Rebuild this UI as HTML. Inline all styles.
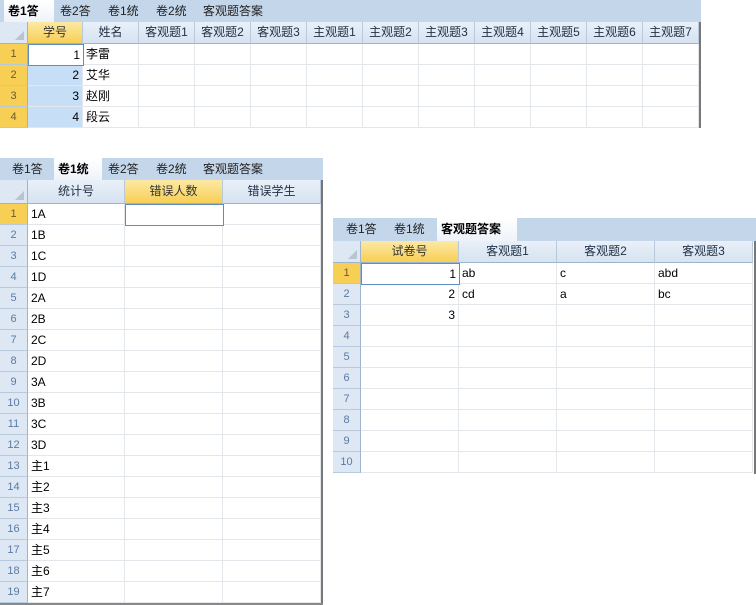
<!DOCTYPE html>
<html><head><meta charset="utf-8"><style>
body{margin:0;width:756px;height:605px;background:#fff;position:relative;overflow:hidden;font-family:"Liberation Sans","Noto Sans CJK SC",sans-serif;font-size:12px;color:#000}
div{position:absolute;box-sizing:border-box;white-space:nowrap}
.tabs{background:#c4d6ea}
.tab{top:0;height:100%;line-height:22px;color:#222;padding:0 4px;overflow:visible}
.tab.on{background:linear-gradient(#fff,#eef3f9);font-weight:bold;color:#000}
.h{background:linear-gradient(#e9f0f8,#d6e3f1);border-right:1px solid #b9c9dc;border-bottom:1px solid #9eb3cc;text-align:center;color:#1e2e44}
.h.sel{background:linear-gradient(#fce9a4,#f7cf55);color:#333}
.rn{background:#dde8f4;border-right:1px solid #9eb3cc;border-bottom:1px solid #b9c9dc;text-align:center;color:#5a7aa4;font-size:11px}
.rn.sel{background:#f7cf55;color:#6a5a30}
.c{border-right:1px solid #e3e6ea;border-bottom:1px solid #e3e6ea;padding:0 3px;overflow:hidden}
.c.r{text-align:right}
.c.b{background:#c6def6}
.c.act{border:1px solid #5d8dc2 !important;background:#fff}
.corner{background:#dde8f4;border-right:1px solid #9eb3cc;border-bottom:1px solid #9eb3cc}
.corner:after{content:"";position:absolute;right:3px;bottom:3px;border-left:9px solid transparent;border-bottom:9px solid #b8c4d0}
</style></head><body>
<script>
function grid(o){
 var h='';
 h+='<div class="tabs" style="left:'+o.x+'px;top:'+o.ty+'px;width:'+o.w+'px;height:'+(o.hy-o.ty)+'px">';
 o.tabs.forEach(function(t){h+='<div class="tab'+(t[2]?' on':'')+'" style="left:'+t[0]+'px;width:'+t[1]+'px;line-height:'+(o.hy-o.ty)+'px">'+t[3]+'</div>';});
 h+='</div>';
 var xs=o.cols;
 h+='<div class="corner" style="left:'+o.x+'px;top:'+o.hy+'px;width:'+(xs[0]-o.x)+'px;height:'+o.hh+'px"></div>';
 for(var i=0;i<o.heads.length;i++){
  h+='<div class="h'+(o.selc===i?' sel':'')+'" style="left:'+xs[i]+'px;top:'+o.hy+'px;width:'+(xs[i+1]-xs[i])+'px;height:'+o.hh+'px;line-height:'+(o.hh-1)+'px">'+o.heads[i]+'</div>';
 }
 var ry=o.hy+o.hh;
 for(var r=0;r<o.rows;r++){
  var y=ry+r*o.rh;
  h+='<div class="rn'+(o.selr.indexOf(r)>=0?' sel':'')+'" style="left:'+o.x+'px;top:'+y+'px;width:'+(xs[0]-o.x)+'px;height:'+o.rh+'px;line-height:'+o.rh+'px">'+(r+1)+'</div>';
  for(var i=0;i<o.heads.length;i++){
   var v=(o.data[r]&&o.data[r][i])||'';
   var cls='c'+((o.ralign||[]).indexOf(i)>=0?' r':'')+((o.blue&&o.blue(r,i))?' b':'');
   h+='<div class="'+cls+'" style="left:'+xs[i]+'px;top:'+y+'px;width:'+(xs[i+1]-xs[i])+'px;height:'+o.rh+'px;line-height:'+o.rh+'px">'+v+'</div>';
  }
 }
 var a=o.act;
 h+='<div class="c act" style="left:'+xs[a[1]]+'px;top:'+(ry+a[0]*o.rh)+'px;width:'+(xs[a[1]+1]-xs[a[1]]+1)+'px;height:'+(o.rh+1)+'px;line-height:'+(o.rh-1)+'px;'+(o.ralign&&o.ralign.indexOf(a[1])>=0?'text-align:right':'')+'">'+((o.data[a[0]]&&o.data[a[0]][a[1]])||'')+'</div>';
 if(o.rb) h+='<div style="left:'+(o.x+o.w-2)+'px;top:'+o.hy+'px;width:2px;height:'+(o.rb-o.hy)+'px;background:#777"></div>';
 if(o.bb) h+='<div style="left:'+o.x+'px;top:'+(o.bb-2)+'px;width:'+o.w+'px;height:2px;background:#888"></div>';
 document.write(h);
}
var c1=[28,83,139];for(var i=0;i<10;i++)c1.push(c1[c1.length-1]+56);
grid({x:0,ty:0,hy:22,w:701,hh:22,rh:21,rows:4,cols:c1,
 tabs:[[4,50,1,'卷1答'],[56,44,0,'卷2答'],[104,44,0,'卷1统'],[152,44,0,'卷2统'],[199,80,0,'客观题答案']],
 heads:['学号','姓名','客观题1','客观题2','客观题3','主观题1','主观题2','主观题3','主观题4','主观题5','主观题6','主观题7'],
 selc:0,selr:[0,1,2,3],ralign:[0],blue:function(r,i){return i==0&&r>0},
 data:[['1','李雷'],['2','艾华'],['3','赵刚'],['4','段云']],act:[0,0],rb:128});
var d2=['1A','1B','1C','1D','2A','2B','2C','2D','3A','3B','3C','3D','主1','主2','主3','主4','主5','主6','主7'].map(function(s){return [s]});
grid({x:0,ty:158,hy:180,w:323,hh:24,rh:21,rows:19,cols:[28,125,223,321],
 tabs:[[8,46,0,'卷1答'],[54,48,1,'卷1统'],[104,44,0,'卷2答'],[152,44,0,'卷2统'],[199,80,0,'客观题答案']],
 heads:['统计号','错误人数','错误学生'],selc:1,selr:[0],data:d2,act:[0,1],rb:605,bb:605});
grid({x:333,ty:218,hy:241,w:423,hh:22,rh:21,rows:10,cols:[361,459,557,655,753],
 tabs:[[9,44,0,'卷1答'],[57,44,0,'卷1统'],[104,80,1,'客观题答案']],
 heads:['试卷号','客观题1','客观题2','客观题3'],selc:0,selr:[0],ralign:[0],
 data:[['1','ab','c','abd'],['2','cd','a','bc'],['3']],act:[0,0],rb:474});
</script>
</body></html>
